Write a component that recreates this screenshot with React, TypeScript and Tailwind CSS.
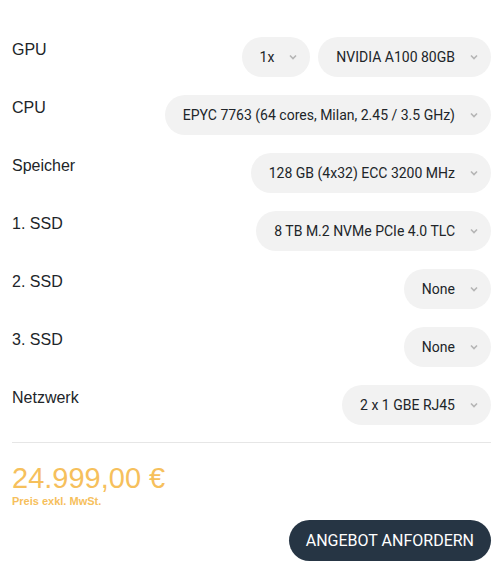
const rows: { label: string; options: string[] }[] = [
  { label: 'GPU', options: ['1x', 'NVIDIA A100 80GB'] },
  { label: 'CPU', options: ['EPYC 7763 (64 cores, Milan, 2.45 / 3.5 GHz)'] },
  { label: 'Speicher', options: ['128 GB (4x32) ECC 3200 MHz'] },
  { label: '1. SSD', options: ['8 TB M.2 NVMe PCIe 4.0 TLC'] },
  { label: '2. SSD', options: ['None'] },
  { label: '3. SSD', options: ['None'] },
  { label: 'Netzwerk', options: ['2 x 1 GBE RJ45'] },
];

function Chevron() {
  return (
    <svg width="8" height="6" viewBox="0 0 8 6" className="shrink-0">
      <path d="M1 1.5 L4 4.5 L7 1.5" fill="none" stroke="#b5b5b5" strokeWidth="1.6" />
    </svg>
  );
}

function Select({ value }: { value: string }) {
  return (
    <div className="flex h-10 items-center gap-[15px] rounded-full bg-[#f2f2f2] pr-[13px] pl-[18px] text-sm text-[#212529]">
      <span className="whitespace-nowrap">{value}</span>
      <Chevron />
    </div>
  );
}

export default function App() {
  return (
    <div className="min-h-[569px] bg-white pt-[37px] pr-1.5 pl-3 font-['Roboto',sans-serif]">
      <div className="flex flex-col gap-[18px]">
        {rows.map((row) => (
          <div key={row.label} className="flex items-start justify-between">
            <span className="pt-[2px] font-['Liberation_Sans',Arial,sans-serif] text-base leading-[22px] text-[#212529]">
              {row.label}
            </span>
            <div className="flex gap-2">
              {row.options.map((o) => (
                <Select key={o} value={o} />
              ))}
            </div>
          </div>
        ))}
      </div>

      <div className="mt-[17px] border-t border-[#e6e6e6]" />

      <div className="pt-[18px] font-['Liberation_Sans',Arial,sans-serif] text-[#f6c05c]">
        <div className="text-[29px] leading-[34px]">24.999,00 €</div>
        <div className="text-[11px] leading-[13px] font-bold">Preis exkl. MwSt.</div>
      </div>

      <div className="mt-[12px] flex justify-end">
        <button className="h-[41px] rounded-full bg-[#263544] px-[17px] text-base text-white">
          ANGEBOT ANFORDERN
        </button>
      </div>
    </div>
  );
}
